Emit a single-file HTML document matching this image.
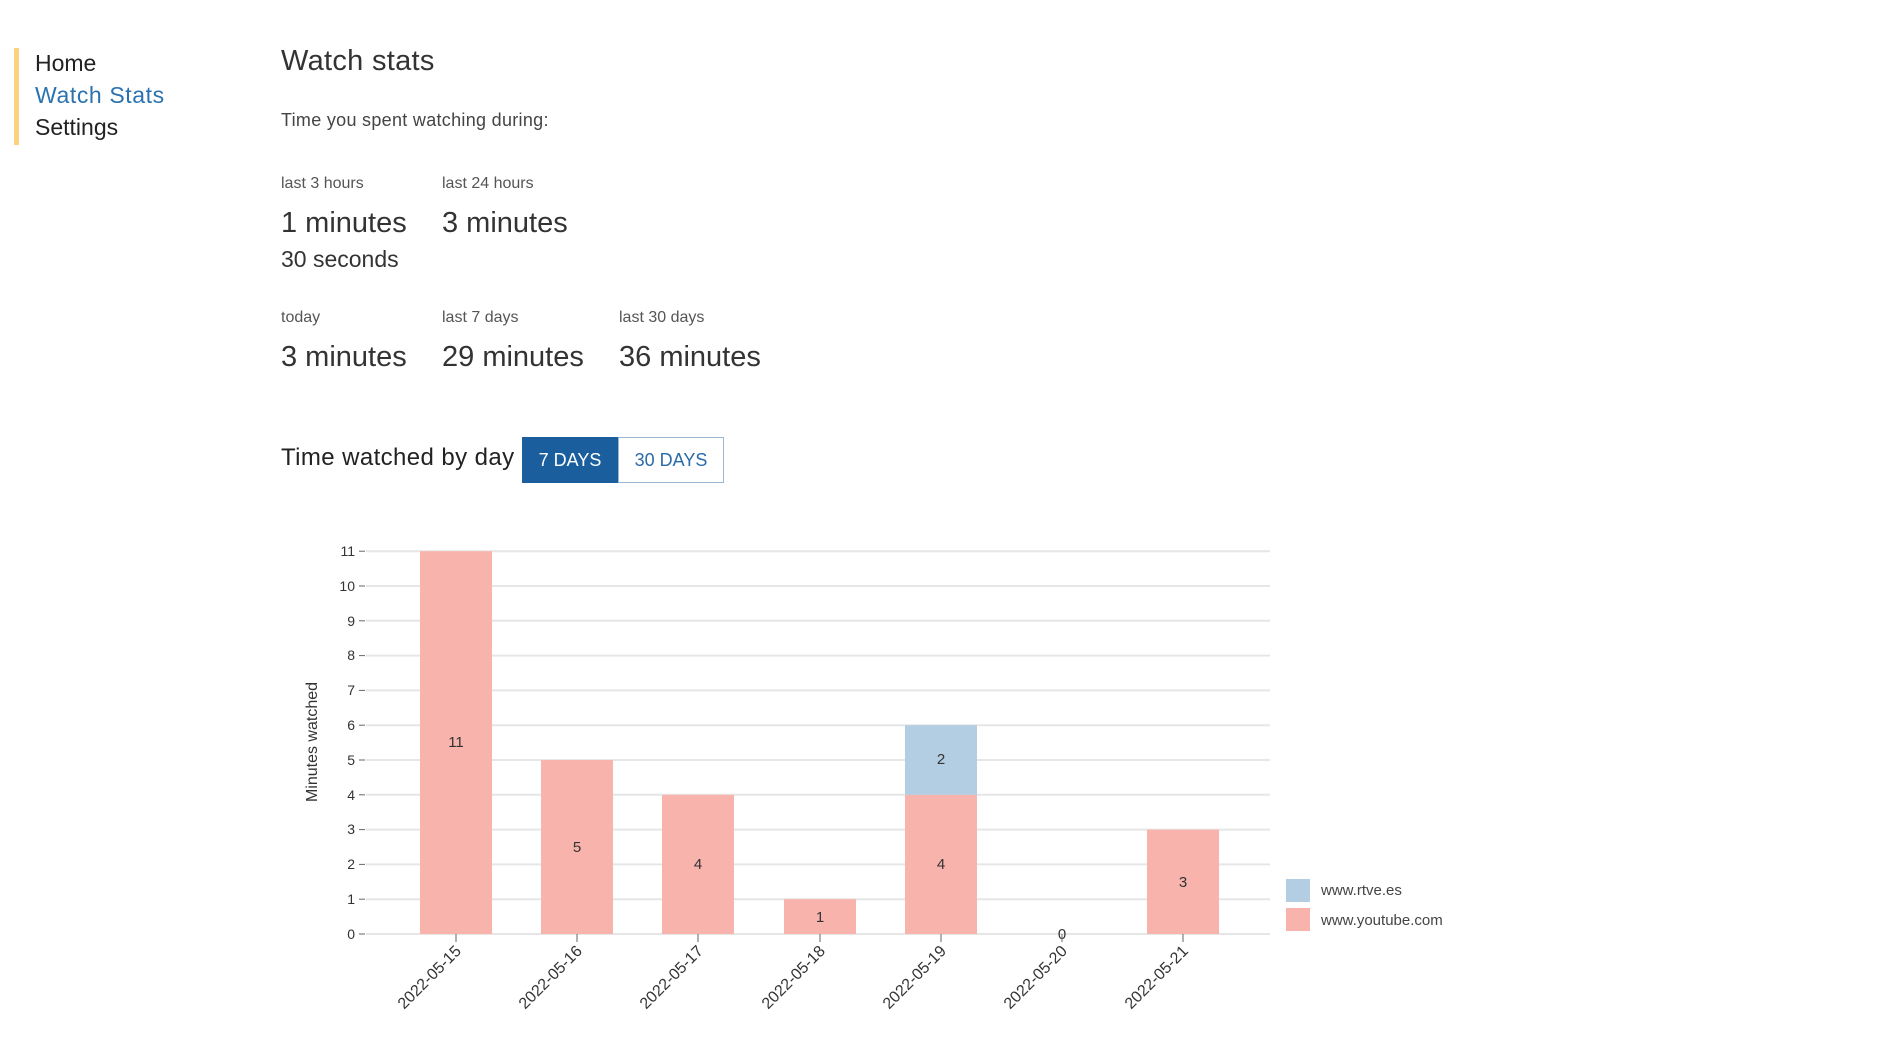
<!DOCTYPE html>
<html><head><meta charset="utf-8"><style>
body{margin:0;width:1882px;height:1050px;background:#fff;font-family:"Liberation Sans",sans-serif;color:#333;position:relative;overflow:hidden}
.a{position:absolute;white-space:nowrap}
</style></head><body>
<div class="a" style="left:14px;top:48px;width:5px;height:97px;background:#fcd27f"></div>
<div class="a" style="left:35px;top:50px;font-size:23px;color:#222">Home</div>
<div class="a" style="left:35px;top:82px;font-size:23px;color:#2a72b0;letter-spacing:0.6px">Watch Stats</div>
<div class="a" style="left:35px;top:114px;font-size:23px;color:#222">Settings</div>

<div class="a" style="left:281px;top:45px;font-size:29px;color:#333;letter-spacing:0.3px">Watch stats</div>
<div class="a" style="left:281px;top:110px;font-size:18px;color:#444;letter-spacing:0.3px">Time you spent watching during:</div>

<div class="a" style="left:281px;top:175px;font-size:16px;color:#555">last 3 hours</div>
<div class="a" style="left:442px;top:175px;font-size:16px;color:#555">last 24 hours</div>
<div class="a" style="left:281px;top:207px;font-size:29px;color:#333">1 minutes</div>
<div class="a" style="left:442px;top:207px;font-size:29px;color:#333">3 minutes</div>
<div class="a" style="left:281px;top:246px;font-size:23px;color:#333">30 seconds</div>

<div class="a" style="left:281px;top:309px;font-size:16px;color:#555">today</div>
<div class="a" style="left:442px;top:309px;font-size:16px;color:#555">last 7 days</div>
<div class="a" style="left:619px;top:309px;font-size:16px;color:#555">last 30 days</div>
<div class="a" style="left:281px;top:341px;font-size:29px;color:#333">3 minutes</div>
<div class="a" style="left:442px;top:341px;font-size:29px;color:#333">29 minutes</div>
<div class="a" style="left:619px;top:341px;font-size:29px;color:#333">36 minutes</div>

<div class="a" style="left:281px;top:444px;font-size:24px;color:#222;letter-spacing:0.4px">Time watched by day</div>
<div class="a" style="left:522px;top:437px;width:96px;height:46px;background:#1a5e9e;color:#fff;font-size:18px;line-height:46px;text-align:center">7 DAYS</div>
<div class="a" style="left:618px;top:437px;width:104px;height:44px;border:1px solid #9ab8d6;color:#2a6aa8;font-size:18px;line-height:44px;text-align:center">30 DAYS</div>

<svg class="a" style="left:0;top:0" width="1882" height="1050" font-family="Liberation Sans, sans-serif">
<g stroke="#e6e6e6" stroke-width="2">
<line x1="366" x2="1270" y1="551.2" y2="551.2"/><line x1="366" x2="1270" y1="586" y2="586"/>
<line x1="366" x2="1270" y1="620.8" y2="620.8"/><line x1="366" x2="1270" y1="655.6" y2="655.6"/>
<line x1="366" x2="1270" y1="690.4" y2="690.4"/><line x1="366" x2="1270" y1="725.2" y2="725.2"/>
<line x1="366" x2="1270" y1="760" y2="760"/><line x1="366" x2="1270" y1="794.8" y2="794.8"/>
<line x1="366" x2="1270" y1="829.6" y2="829.6"/><line x1="366" x2="1270" y1="864.4" y2="864.4"/>
<line x1="366" x2="1270" y1="899.2" y2="899.2"/><line x1="366" x2="1270" y1="934" y2="934"/>
</g>
<g fill="#333" font-size="14" text-anchor="end">
<text x="355" y="556">11</text><text x="355" y="591">10</text><text x="355" y="626">9</text><text x="355" y="660">8</text><text x="355" y="695">7</text><text x="355" y="730">6</text><text x="355" y="765">5</text><text x="355" y="800">4</text><text x="355" y="834">3</text><text x="355" y="869">2</text><text x="355" y="904">1</text><text x="355" y="939">0</text>
</g>
<g stroke="#666"><line x1="359" x2="365" y1="551.2" y2="551.2"/><line x1="359" x2="365" y1="586" y2="586"/><line x1="359" x2="365" y1="620.8" y2="620.8"/><line x1="359" x2="365" y1="655.6" y2="655.6"/><line x1="359" x2="365" y1="690.4" y2="690.4"/><line x1="359" x2="365" y1="725.2" y2="725.2"/><line x1="359" x2="365" y1="760" y2="760"/><line x1="359" x2="365" y1="794.8" y2="794.8"/><line x1="359" x2="365" y1="829.6" y2="829.6"/><line x1="359" x2="365" y1="864.4" y2="864.4"/><line x1="359" x2="365" y1="899.2" y2="899.2"/><line x1="359" x2="365" y1="934" y2="934"/></g>
<text transform="translate(317,742) rotate(-90)" text-anchor="middle" font-size="16" fill="#333">Minutes watched</text>
<g fill="#f9b3ad">
<rect x="420" y="551.2" width="72" height="382.8"/>
<rect x="541" y="760" width="72" height="174"/>
<rect x="662" y="794.8" width="72" height="139.2"/>
<rect x="784" y="899.2" width="72" height="34.8"/>
<rect x="905" y="794.8" width="72" height="139.2"/>
<rect x="1147" y="829.6" width="72" height="104.4"/>
</g>
<rect x="905" y="725.2" width="72" height="69.6" fill="#b3cde3"/>
<g fill="#333" font-size="15" text-anchor="middle">
<text x="456" y="747">11</text><text x="577" y="852">5</text><text x="698" y="869">4</text><text x="820" y="922">1</text><text x="941" y="764">2</text><text x="941" y="869">4</text><text x="1062" y="939">0</text><text x="1183" y="887">3</text>
</g>
<g stroke="#666"><line x1="456" x2="456" y1="934" y2="942"/><line x1="577" x2="577" y1="934" y2="942"/><line x1="698" x2="698" y1="934" y2="942"/><line x1="820" x2="820" y1="934" y2="942"/><line x1="941" x2="941" y1="934" y2="942"/><line x1="1062" x2="1062" y1="934" y2="942"/><line x1="1183" x2="1183" y1="934" y2="942"/></g>
<g fill="#333" font-size="16" text-anchor="end">
<text transform="translate(462,952) rotate(-45)">2022-05-15</text>
<text transform="translate(583,952) rotate(-45)">2022-05-16</text>
<text transform="translate(704,952) rotate(-45)">2022-05-17</text>
<text transform="translate(826,952) rotate(-45)">2022-05-18</text>
<text transform="translate(947,952) rotate(-45)">2022-05-19</text>
<text transform="translate(1068,952) rotate(-45)">2022-05-20</text>
<text transform="translate(1189,952) rotate(-45)">2022-05-21</text>
</g>
<rect x="1286" y="879" width="24" height="23" fill="#b3cde3"/>
<rect x="1286" y="908" width="24" height="23" fill="#f9b3ad"/>
<text x="1321" y="895" font-size="15" fill="#444">www.rtve.es</text>
<text x="1321" y="925" font-size="15" fill="#444">www.youtube.com</text>
</svg>
</body></html>
